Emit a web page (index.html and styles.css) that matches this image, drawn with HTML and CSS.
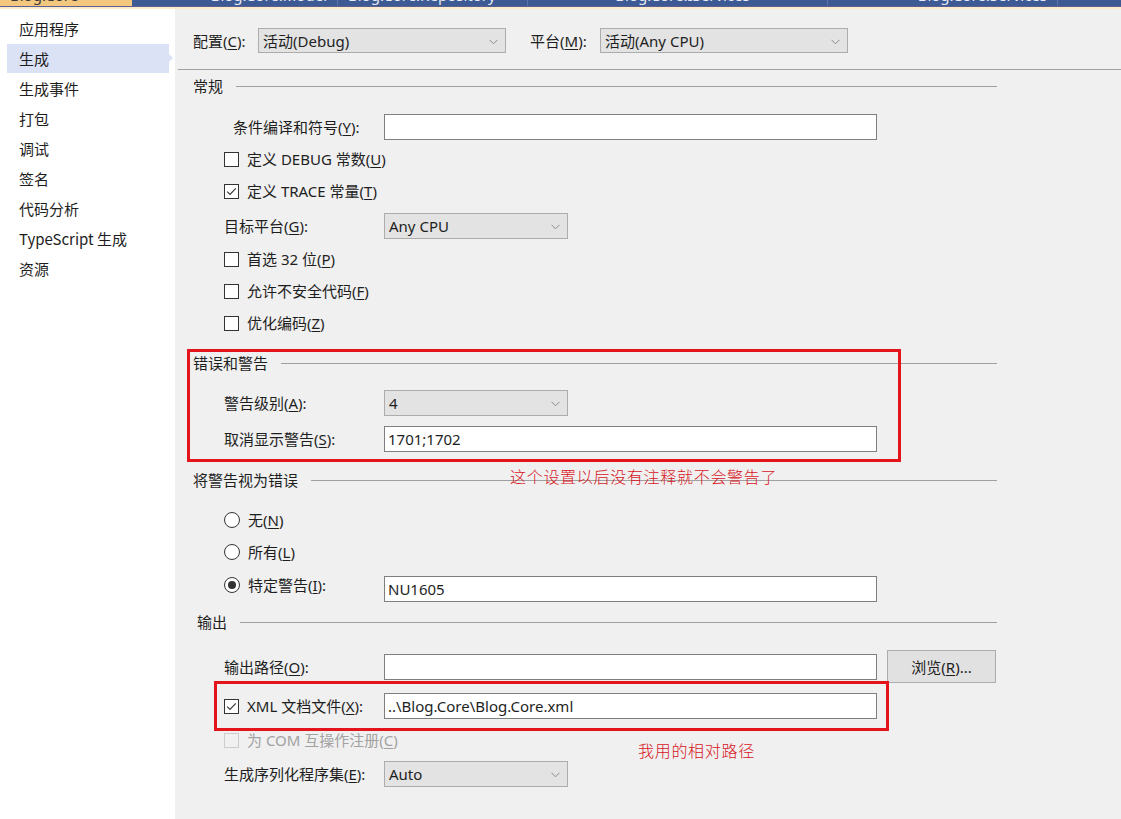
FILE: index.html
```html
<!DOCTYPE html>
<html lang="zh-CN">
<head>
<meta charset="utf-8">
<title>Blog.Core 属性 - 生成</title>
<link rel="stylesheet" href="styles.css">
</head>
<body>
<div class="tabstrip">
  <div class="tab tab-active"><span class="tab-text">Blog.Core</span><span class="tab-x">✕</span></div>
  <div class="tab tab-w206"><span class="tab-text tab-text-r">Blog.Core.Model</span></div>
  <div class="tab tab-w190"><span class="tab-text">Blog.Core.Repository</span></div>
  <div class="tab tab-w300"><span class="tab-text tab-text-c">Blog.Core.IServices</span></div>
  <div class="tab tab-w230"><span class="tab-text tab-text-r">Blog.Core.Services</span></div>
  <div class="tab tab-rest"></div>
</div>
<div class="cream"></div>
<div class="main">
  <nav class="sidebar">
    <div class="nav-item">应用程序</div>
    <div class="nav-item selected">生成</div>
    <div class="nav-item">生成事件</div>
    <div class="nav-item">打包</div>
    <div class="nav-item">调试</div>
    <div class="nav-item">签名</div>
    <div class="nav-item">代码分析</div>
    <div class="nav-item">TypeScript 生成</div>
    <div class="nav-item">资源</div>
  </nav>

  <div class="content">
    <div class="config-row">
      <span class="cfg-label">配置(<u>C</u>):</span>
      <div class="select select-wide"><span>活动(Debug)</span><svg class="chev" width="9" height="6" viewBox="0 0 9 6"><path d="M0.5 0.8 L4.5 4.8 L8.5 0.8" fill="none" stroke="#8a8a8a" stroke-width="1"/></svg></div>
      <span class="cfg-label cfg-label-2">平台(<u>M</u>):</span>
      <div class="select select-wide"><span>活动(Any CPU)</span><svg class="chev" width="9" height="6" viewBox="0 0 9 6"><path d="M0.5 0.8 L4.5 4.8 L8.5 0.8" fill="none" stroke="#8a8a8a" stroke-width="1"/></svg></div>
    </div>
    <div class="rule"></div>

    <div class="section-head m6"><span>常规</span><i></i></div>
    <div class="row field m18">
      <span class="label label-cond">条件编译和符号(<u>Y</u>):</span>
      <div class="input"></div>
    </div>
    <div class="row check m3"><span class="cb"></span><span>定义 DEBUG 常数(<u>U</u>)</span></div>
    <div class="row check"><span class="cb"><svg width="13" height="13" viewBox="0 0 13 13"><path d="M2.2 6.6 L5 9.4 L10.8 3.4" fill="none" stroke="#333" stroke-width="1.1"/></svg></span><span>定义 TRACE 常量(<u>T</u>)</span></div>
    <div class="row field m6">
      <span class="label">目标平台(<u>G</u>):</span>
      <div class="select select-narrow"><span>Any CPU</span><svg class="chev" width="9" height="6" viewBox="0 0 9 6"><path d="M0.5 0.8 L4.5 4.8 L8.5 0.8" fill="none" stroke="#8a8a8a" stroke-width="1"/></svg></div>
    </div>
    <div class="row check m4"><span class="cb"></span><span>首选 32 位(<u>P</u>)</span></div>
    <div class="row check"><span class="cb"></span><span>允许不安全代码(<u>F</u>)</span></div>
    <div class="row check"><span class="cb"></span><span>优化编码(<u>Z</u>)</span></div>

    <div class="section-head m14"><span>错误和警告</span><i></i></div>
    <div class="row field m17">
      <span class="label">警告级别(<u>A</u>):</span>
      <div class="select select-narrow"><span>4</span><svg class="chev" width="9" height="6" viewBox="0 0 9 6"><path d="M0.5 0.8 L4.5 4.8 L8.5 0.8" fill="none" stroke="#8a8a8a" stroke-width="1"/></svg></div>
    </div>
    <div class="row field m10">
      <span class="label">取消显示警告(<u>S</u>):</span>
      <div class="input"><span>1701;1702</span></div>
    </div>

    <div class="section-head m18"><span>将警告视为错误</span><i></i></div>
    <div class="row check m14"><span class="rb"></span><span>无(<u>N</u>)</span></div>
    <div class="row check h31"><span class="rb"></span><span>所有(<u>L</u>)</span></div>
    <div class="row field field-top m9">
      <span class="label label-radio"><span class="rb checked"></span><span>特定警告(<u>I</u>):</span></span>
      <div class="input"><span>NU1605</span></div>
    </div>

    <div class="section-head head-out m10"><span>输出</span><i></i></div>
    <div class="row field h33 m18">
      <span class="label">输出路径(<u>O</u>):</span>
      <div class="input"></div>
      <div class="button">浏览(<u>R</u>)...</div>
    </div>
    <div class="row field m10">
      <span class="label label-radio"><span class="cb"><svg width="13" height="13" viewBox="0 0 13 13"><path d="M2.2 6.6 L5 9.4 L10.8 3.4" fill="none" stroke="#333" stroke-width="1.1"/></svg></span><span>XML 文档文件(<u>X</u>):</span></span>
      <div class="input"><span>..\Blog.Core\Blog.Core.xml</span></div>
    </div>
    <div class="row check disabled m5"><span class="cb"></span><span>为 COM 互操作注册(<u>C</u>)</span></div>
    <div class="row field m5">
      <span class="label">生成序列化程序集(<u>E</u>):</span>
      <div class="select select-narrow"><span>Auto</span><svg class="chev" width="9" height="6" viewBox="0 0 9 6"><path d="M0.5 0.8 L4.5 4.8 L8.5 0.8" fill="none" stroke="#8a8a8a" stroke-width="1"/></svg></div>
    </div>

    <div class="red-box box-warn"></div>
    <div class="red-box box-xml"></div>
    <div class="note note-warn">这个设置以后没有注释就不会警告了</div>
    <div class="note note-xml">我用的相对路径</div>
  </div>
</div>
</body>
</html>
```

FILE: styles.css
```css
* { box-sizing: border-box; }
html, body { margin: 0; padding: 0; }
body {
  width: 1121px;
  height: 819px;
  overflow: hidden;
  background: #f0f0f0;
  font-family: "Noto Sans", "Noto Sans CJK SC", sans-serif;
  font-size: 15px;
  line-height: 20px;
  color: #1e1e1e;
}
u { text-decoration: underline; text-underline-offset: 2px; text-decoration-thickness: 1px; }

/* top document tab strip (clipped) */
.tabstrip {
  display: flex;
  height: 7px;
  overflow: hidden;
  background: #3d5a94;
  border-bottom: 1px solid #5b5f93;
}
.tab {
  position: relative;
  height: 7px;
  border-right: 1px solid #5a74a9;
  overflow: hidden;
  color: #e8ecf5;
  font-size: 15px;
}
.tab-active {
  width: 132px;
  background: #f4c77e;
  color: #3a3a3a;
  border-right: none;
}
.tab-text {
  display: block;
  margin-top: -15px;
  padding-left: 10px;
  line-height: 20px;
  white-space: nowrap;
}
.tab-text-r { text-align: right; padding-right: 10px; }
.tab-text-c { text-align: center; }
.tab-x {
  position: absolute;
  right: 10px;
  top: -13px;
  font-size: 12px;
  color: #3a3a3a;
}
.tab-w206 { width: 206px; }
.tab-w190 { width: 190px; }
.tab-w300 { width: 300px; }
.tab-w230 { width: 230px; }
.tab-rest { flex: 1; border-right: none; }
.cream { height: 2px; background: #fcebc8; }

.main {
  display: flex;
  height: 810px;
}

/* sidebar */
.sidebar {
  width: 175px;
  flex: none;
  background: #ffffff;
  padding-top: 5px;
}
.nav-item {
  position: relative;
  height: 30px;
  margin-left: 7px;
  width: 162px;
  padding-left: 12px;
  line-height: 30px;
  color: #1e1e1e;
  font-family: "Noto Sans CJK SC", sans-serif;
  font-size: 15px;
}
.nav-item.selected { background: #dbe2f5; height: 29px; margin-bottom: 1px; line-height: 30px; }
.nav-item.selected::after {
  content: "";
  position: absolute;
  right: -4px;
  top: 10px;
  border-left: 4px solid #dbe2f5;
  border-top: 4px solid transparent;
  border-bottom: 4px solid transparent;
}

/* content */
.content {
  position: relative;
  flex: 1;
  background: #f0f0f0;
  padding-left: 18px;
  display: flex;
  flex-direction: column;
}
.config-row {
  display: flex;
  align-items: center;
  height: 25px;
  margin-top: 19px;
}
.cfg-label { width: 65px; white-space: nowrap; }
.cfg-label-2 { margin-left: 24px; width: 70px; }

.select {
  position: relative;
  height: 26px;
  background: #e3e3e3;
  border: 1px solid #acacac;
  display: flex;
  align-items: center;
  padding-left: 4px;
  white-space: nowrap;
}
.config-row .select { height: 25px; }
.select-wide { width: 248px; }
.select-narrow { width: 184px; }
.chev { position: absolute; right: 7px; top: 50%; margin-top: -2px; }

.rule {
  height: 1px;
  background: #a0a0a0;
  margin-top: 16px;
  margin-left: -15px;
}

.section-head {
  display: flex;
  align-items: center;
  height: 20px;
  width: 804px;
}
.section-head span { white-space: nowrap; }
.section-head i {
  flex: 1;
  height: 1px;
  background: #a0a0a0;
  margin-left: 13px;
}
.head-out { padding-left: 4px; width: 804px; }

.row {
  display: flex;
  align-items: center;
  margin-left: 31px;
  white-space: nowrap;
}
.row.check { height: 32px; }
.row.field { height: 26px; }
.row.h31 { height: 31px; }
.row.h33 { height: 33px; }
.row.field-top { align-items: flex-start; }
.field-top .label { margin-top: -1px; }

.label { width: 160px; flex: none; display: flex; align-items: center; }
.label-cond { padding-left: 9px; }
.label-radio .cb, .label-radio .rb { margin-right: 8px; }

.input {
  width: 493px;
  height: 26px;
  background: #ffffff;
  border: 1px solid #7f7f7f;
  padding-left: 3px;
  display: flex;
  align-items: center;
  flex: none;
}
.button {
  margin-left: 10px;
  width: 109px;
  height: 33px;
  background: #e1e1e1;
  border: 1px solid #adadad;
  display: flex;
  align-items: center;
  justify-content: center;
}

.cb {
  width: 15px;
  height: 15px;
  flex: none;
  border: 1px solid #333333;
  background: #ffffff;
  margin-right: 8px;
  display: flex;
  align-items: center;
  justify-content: center;
}
.rb {
  width: 16px;
  height: 16px;
  flex: none;
  border: 1px solid #333333;
  border-radius: 50%;
  background: #ffffff;
  margin-right: 8px;
  display: flex;
  align-items: center;
  justify-content: center;
}
.rb.checked::after {
  content: "";
  width: 8px;
  height: 8px;
  border-radius: 50%;
  background: #333333;
}
.disabled { color: #a2a2a2; }
.disabled .cb { border-color: #cccccc; background: #f0f0f0; }

.m3 { margin-top: 3px; }
.m4 { margin-top: 4px; }
.m5 { margin-top: 5px; }
.m6 { margin-top: 6px; }
.m9 { margin-top: 9px; }
.m10 { margin-top: 10px; }
.m14 { margin-top: 14px; }
.m17 { margin-top: 17px; }
.m18 { margin-top: 18px; }

/* annotations drawn over the screenshot */
.red-box {
  position: absolute;
  border: 3px solid #e3141c;
}
.box-warn { left: 12px; top: 340px; width: 714px; height: 113px; }
.box-xml { left: 39px; top: 672px; width: 675px; height: 50px; }
.note {
  position: absolute;
  color: #d7141c;
  font-family: "Noto Sans CJK SC", sans-serif;
  font-weight: 300;
  font-size: 16px;
  letter-spacing: 0.7px;
  line-height: 20px;
  white-space: nowrap;
}
.note-warn { left: 335px; top: 457px; }
.note-xml { left: 463px; top: 731px; }
```
